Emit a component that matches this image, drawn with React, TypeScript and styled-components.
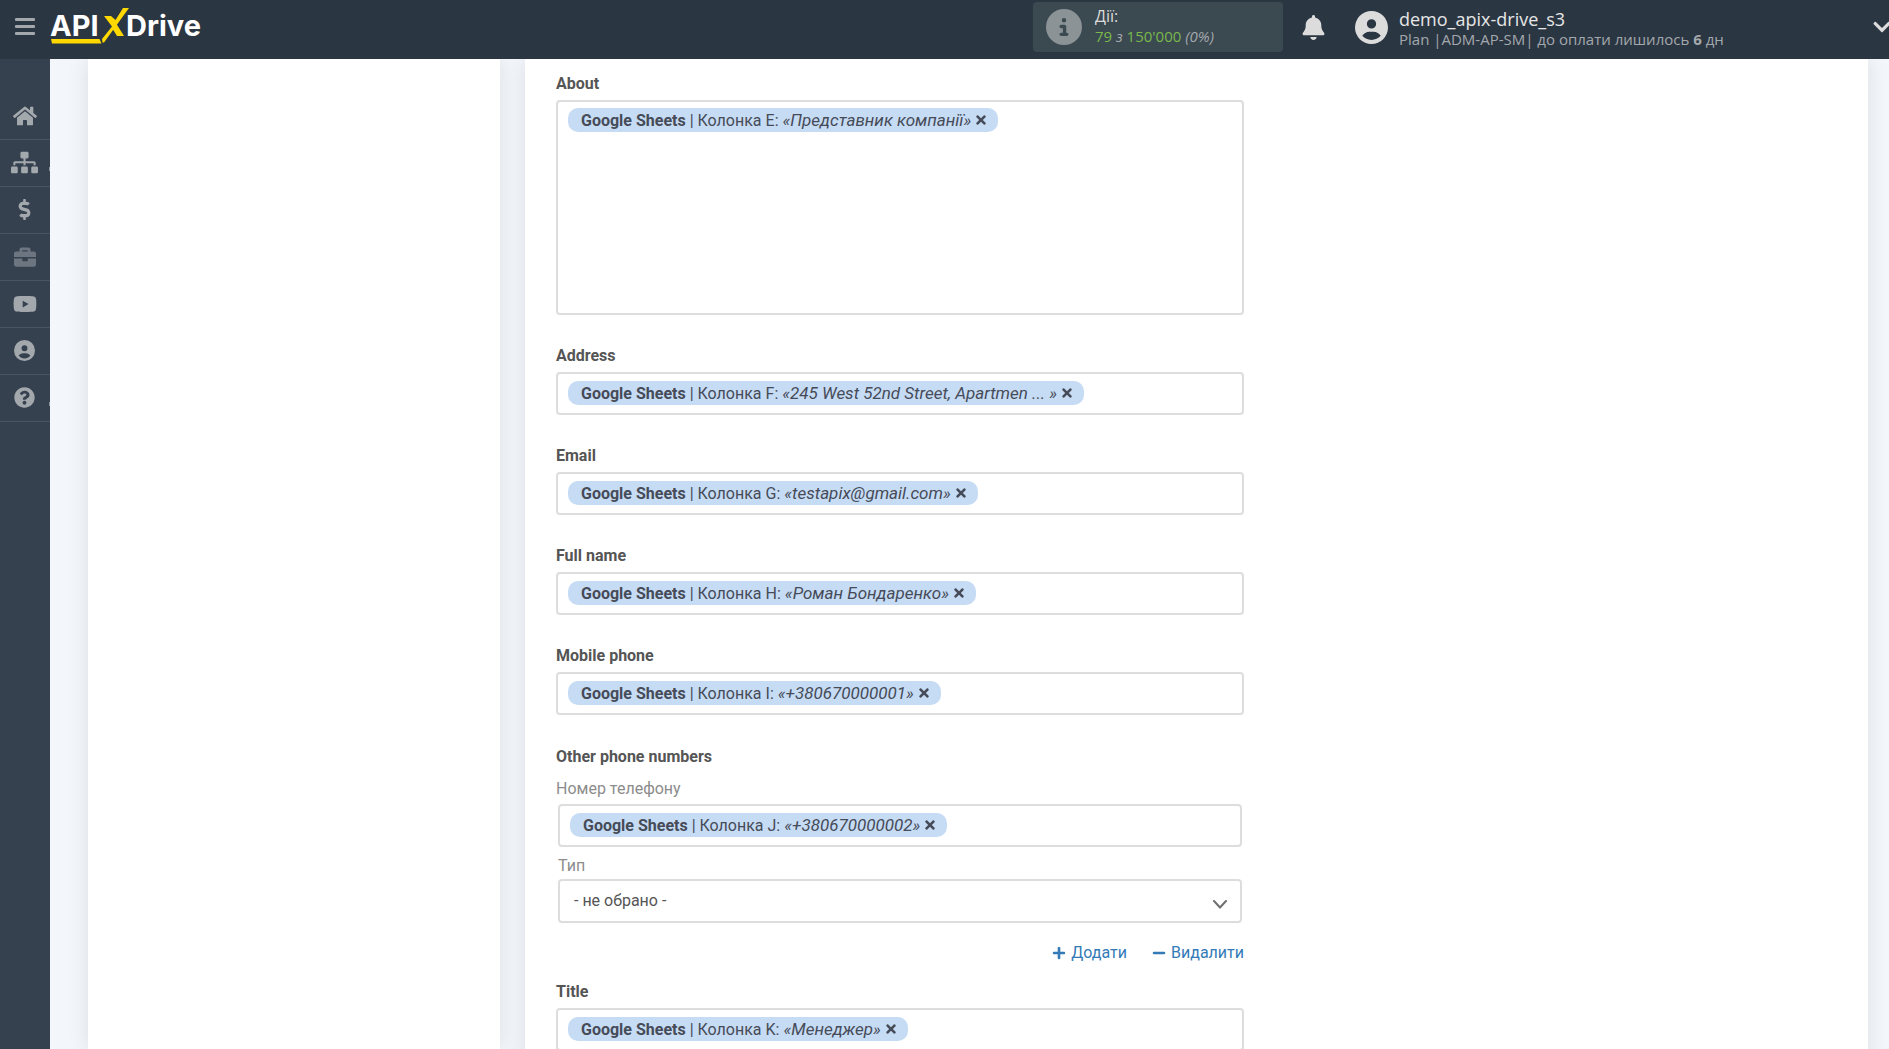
import React from "react";
import styled, { createGlobalStyle } from "styled-components";
import {
  FaHome,
  FaSitemap,
  FaDollarSign,
  FaBriefcase,
  FaYoutube,
  FaQuestionCircle,
  FaPlus,
  FaMinus,
  FaTimes,
  FaChevronDown,
} from "react-icons/fa";
import { FaBell, FaCircleInfo, FaCircleUser } from "react-icons/fa6";

const GlobalStyle = createGlobalStyle`
  *, *::before, *::after { box-sizing: border-box; }
  body {
    margin: 0;
    background: #f3f7fc;
    color: #555555;
    font: 16px/24px Roboto, "Noto Sans", sans-serif;
  }
  button, input, select { font: inherit; color: inherit; }
  button { padding: 0; border: 0; background: none; cursor: pointer; }
  svg { display: block; flex: none; }
`;

const Page = styled.div`
  display: flex;
  flex-direction: column;
  height: 100vh;
  overflow: hidden;
`;

const Header = styled.header`
  display: flex;
  align-items: center;
  flex: none;
  height: 59px;
  padding-bottom: 5px;
  overflow: hidden;
  background: #2b3643;
  font-family: "Open Sans", "Noto Sans", sans-serif;
`;

const Burger = styled.button`
  display: flex;
  flex-direction: column;
  gap: 4px;
  width: 50px;
  padding: 0 15px 2px;
`;

const BurgerBar = styled.span`
  height: 3px;
  border-radius: 1px;
  background: #a3a8ac;
`;

const LogoLink = styled.a`
  margin-right: auto;
`;

const ActionsBox = styled.div`
  display: flex;
  align-items: center;
  gap: 13px;
  flex: none;
  width: 250px;
  height: 50px;
  padding: 0 13px;
  border-radius: 4px;
  background: #3b4951;
  color: #8c9396;
`;

const Stack = styled.span<{ $top?: number; $bottom?: number }>`
  display: flex;
  flex-direction: column;
  padding: ${(p) => p.$top ?? 0}px 0 ${(p) => p.$bottom ?? 0}px;
  white-space: nowrap;
`;

const Line = styled.span<{ $size: number; $color: string }>`
  font-size: ${(p) => p.$size}px;
  line-height: 20px;
  color: ${(p) => p.$color};
`;

const Green = styled.span`
  color: #7ab84c;
`;

const BellButton = styled.button`
  flex: none;
  margin: 0 29px 0 18px;
  color: #dcdcdc;
`;

const UserMenu = styled.button`
  display: flex;
  align-items: center;
  gap: 11px;
  flex: none;
  width: 534px;
  color: #dcdcdc;
  text-align: left;
`;

const MenuArrow = styled.span`
  margin: 0 -3px 0 auto;
`;

const Body = styled.div`
  display: flex;
  flex: 1;
  min-height: 0;
`;

const Sidebar = styled.nav`
  flex: none;
  width: 50px;
  padding-top: 34px;
  background: #364150;
`;

const NavLink = styled.a<{ $dim?: boolean; $more?: boolean }>`
  position: relative;
  display: flex;
  align-items: center;
  justify-content: center;
  height: 47px;
  padding: 0 1px 1px 0;
  border-bottom: 1px solid #4a5563;
  color: ${(p) => (p.$dim ? "#6c7580" : "#a3a8ac")};

  &::after {
    content: "";
    display: ${(p) => (p.$more ? "block" : "none")};
    position: absolute;
    right: 0;
    bottom: 15px;
    width: 1px;
    height: 4px;
    background: #8c9396;
  }
`;

const Content = styled.main`
  display: flex;
  gap: 25px;
  flex: 1;
  min-width: 0;
  padding: 0 21px 0 38px;
  overflow-y: auto;
  scrollbar-width: none;
`;

const Panel = styled.section`
  min-height: 100%;
  height: max-content;
  background: #ffffff;
  box-shadow: 0 0 20px rgba(0, 0, 0, 0.1);
`;

const SidePanel = styled(Panel)`
  flex: 0 0 412px;
`;

const FormPanel = styled(Panel)`
  flex: 1;
  min-width: 0;
  padding: 13px 31px 40px;
`;

const Form = styled.form`
  display: flex;
  flex-direction: column;
  max-width: 688px;
`;

const Field = styled.div`
  display: flex;
  flex-direction: column;
  gap: 4px;
  margin-bottom: 29px;
`;

const Label = styled.label`
  font-weight: 700;
`;

const SubLabel = styled.label`
  display: block;
  color: #8c8c8c;
`;

const Box = styled.div<{ $tall?: boolean }>`
  display: flex;
  align-items: flex-start;
  min-height: ${(p) => (p.$tall ? 215 : 43)}px;
  padding: ${(p) => (p.$tall ? 6 : 7)}px 10px 6px;
  border: 2px solid #dddddd;
  border-radius: 4px;
  background: #ffffff;
`;

const Chip = styled.span`
  display: flex;
  align-items: center;
  gap: 3px;
  flex: none;
  height: 24px;
  padding: 0 10px 0 13px;
  border-radius: 10px;
  background: #c6dcf5;
  color: #464b58;
  white-space: nowrap;
`;

const ChipValue = styled.i`
  font-size: 17px;
`;

const TextInput = styled.input`
  flex: 1;
  min-width: 0;
  height: 24px;
  padding: 0 4px;
  border: 0;
  outline: 0;
  background: transparent;
`;

const Group = styled.fieldset`
  min-width: 0;
  margin: 0 0 15px;
  padding: 0;
  border: 0;
`;

const GroupTitle = styled.legend`
  padding: 1px 0 8px;
  font-weight: 700;
`;

const GroupRows = styled.div`
  display: flex;
  flex-direction: column;
  gap: 7px;
  padding: 3px 2px 18px;
`;

const SelectWrap = styled.div`
  position: relative;
  margin-top: 1px;
`;

const Select = styled.select`
  display: block;
  appearance: none;
  width: 100%;
  height: 44px;
  padding: 0 40px 0 14px;
  border: 2px solid #dddddd;
  border-radius: 4px;
  background: #ffffff;
`;

const SelectArrow = styled.span`
  position: absolute;
  top: 21px;
  right: 15px;
  pointer-events: none;
`;

const Actions = styled.div`
  display: flex;
  justify-content: flex-end;
  gap: 25px;
`;

const ActionLink = styled.button`
  display: flex;
  align-items: center;
  gap: 5px;
  color: #337ab7;
`;

const navItems = [
  { label: "Головна", icon: <FaHome size={24} /> },
  { label: "Зв'язки", icon: <FaSitemap size={27} />, more: true },
  { label: "Оплата", icon: <FaDollarSign size={21} /> },
  { label: "Послуги", icon: <FaBriefcase size={22} />, dim: true },
  { label: "Відео", icon: <FaYoutube size={24} /> },
  { label: "Профіль", icon: <FaCircleUser size={21} /> },
  { label: "Довідка", icon: <FaQuestionCircle size={21} />, more: true },
];

function Logo() {
  return (
    <svg width="156" height="38" viewBox="0 0 156 38">
      <g fill="#ffffff" fontFamily="Inter, sans-serif" fontWeight="700" fontSize="29">
        <text x="0" y="28">API</text>
        <text x="76" y="28">Drive</text>
      </g>
      <path d="M1 31H49.500L51.500 35.500H2Z" fill="#ffd800" />
      <path d="M73 0H79L54 34.500H52.500L52 31L62 18.500L54 8H61L65.500 12Z" fill="#ffd800" />
      <path d="M64 12L74 28H67L62 20Z" fill="#ffd800" />
    </svg>
  );
}

function ChipBox({ id, column, value, tall }: { id: string; column: string; value: string; tall?: boolean }) {
  return (
    <Box $tall={tall}>
      <Chip>
        <span>
          <b>Google Sheets</b> | Колонка {column}: <ChipValue>«{value}»</ChipValue>
        </span>
        <button type="button" aria-label="Видалити значення">
          <FaTimes size={14} />
        </button>
      </Chip>
      <TextInput id={id} type="text" />
    </Box>
  );
}

function ChipField(props: { id: string; label: string; column: string; value: string; tall?: boolean }) {
  return (
    <Field>
      <Label htmlFor={props.id}>{props.label}</Label>
      <ChipBox id={props.id} column={props.column} value={props.value} tall={props.tall} />
    </Field>
  );
}

export default function App() {
  return (
    <Page>
      <GlobalStyle />
      <Header>
        <Burger type="button" aria-label="Меню">
          <BurgerBar />
          <BurgerBar />
          <BurgerBar />
        </Burger>
        <LogoLink href="#" aria-label="APIXDrive">
          <Logo />
        </LogoLink>
        <ActionsBox>
          <FaCircleInfo size={36} />
          <Stack $bottom={2}>
            <Line $size={16} $color="#dcdcdc">Дії:</Line>
            <Line $size={15} $color="#a3a8ac">
              <Green>79</Green> <i>з</i> <Green>150'000</Green> <i>(0%)</i>
            </Line>
          </Stack>
        </ActionsBox>
        <BellButton type="button" aria-label="Сповіщення">
          <FaBell size={25} />
        </BellButton>
        <UserMenu type="button">
          <FaCircleUser size={33} />
          <Stack $top={4}>
            <Line $size={18} $color="#e6e6e6">demo_apix-drive_s3</Line>
            <Line $size={15} $color="#a3a8ac">
              Plan |ADM-AP-SM| до оплати лишилось <b>6</b> дн
            </Line>
          </Stack>
          <MenuArrow>
            <FaChevronDown size={20} />
          </MenuArrow>
        </UserMenu>
      </Header>
      <Body>
        <Sidebar>
          {navItems.map((item) => (
            <NavLink key={item.label} href="#" aria-label={item.label} $dim={item.dim} $more={item.more}>
              {item.icon}
            </NavLink>
          ))}
        </Sidebar>
        <Content>
          <SidePanel />
          <FormPanel>
            <Form>
              <ChipField id="about" label="About" column="E" value="Представник компанії" tall />
              <ChipField id="address" label="Address" column="F" value="245 West 52nd Street, Apartmen ... " />
              <ChipField id="email" label="Email" column="G" value="testapix@gmail.com" />
              <ChipField id="fullname" label="Full name" column="H" value="Роман Бондаренко" />
              <ChipField id="mobile" label="Mobile phone" column="I" value="+380670000001" />
              <Group>
                <GroupTitle>Other phone numbers</GroupTitle>
                <SubLabel htmlFor="phone">Номер телефону</SubLabel>
                <GroupRows>
                  <ChipBox id="phone" column="J" value="+380670000002" />
                  <div>
                    <SubLabel htmlFor="type">Тип</SubLabel>
                    <SelectWrap>
                      <Select id="type" defaultValue="">
                        <option value="">- не обрано -</option>
                      </Select>
                      <SelectArrow>
                        <svg width="14" height="9" viewBox="0 0 14 9" fill="none" stroke="#707070" strokeWidth="2">
                          <path d="M1 1L7 7.500L13 1" strokeLinecap="round" />
                        </svg>
                      </SelectArrow>
                    </SelectWrap>
                  </div>
                </GroupRows>
                <Actions>
                  <ActionLink type="button">
                    <FaPlus size={14} />
                    Додати
                  </ActionLink>
                  <ActionLink type="button">
                    <FaMinus size={14} />
                    Видалити
                  </ActionLink>
                </Actions>
              </Group>
              <ChipField id="title" label="Title" column="K" value="Менеджер" />
            </Form>
          </FormPanel>
        </Content>
      </Body>
    </Page>
  );
}
